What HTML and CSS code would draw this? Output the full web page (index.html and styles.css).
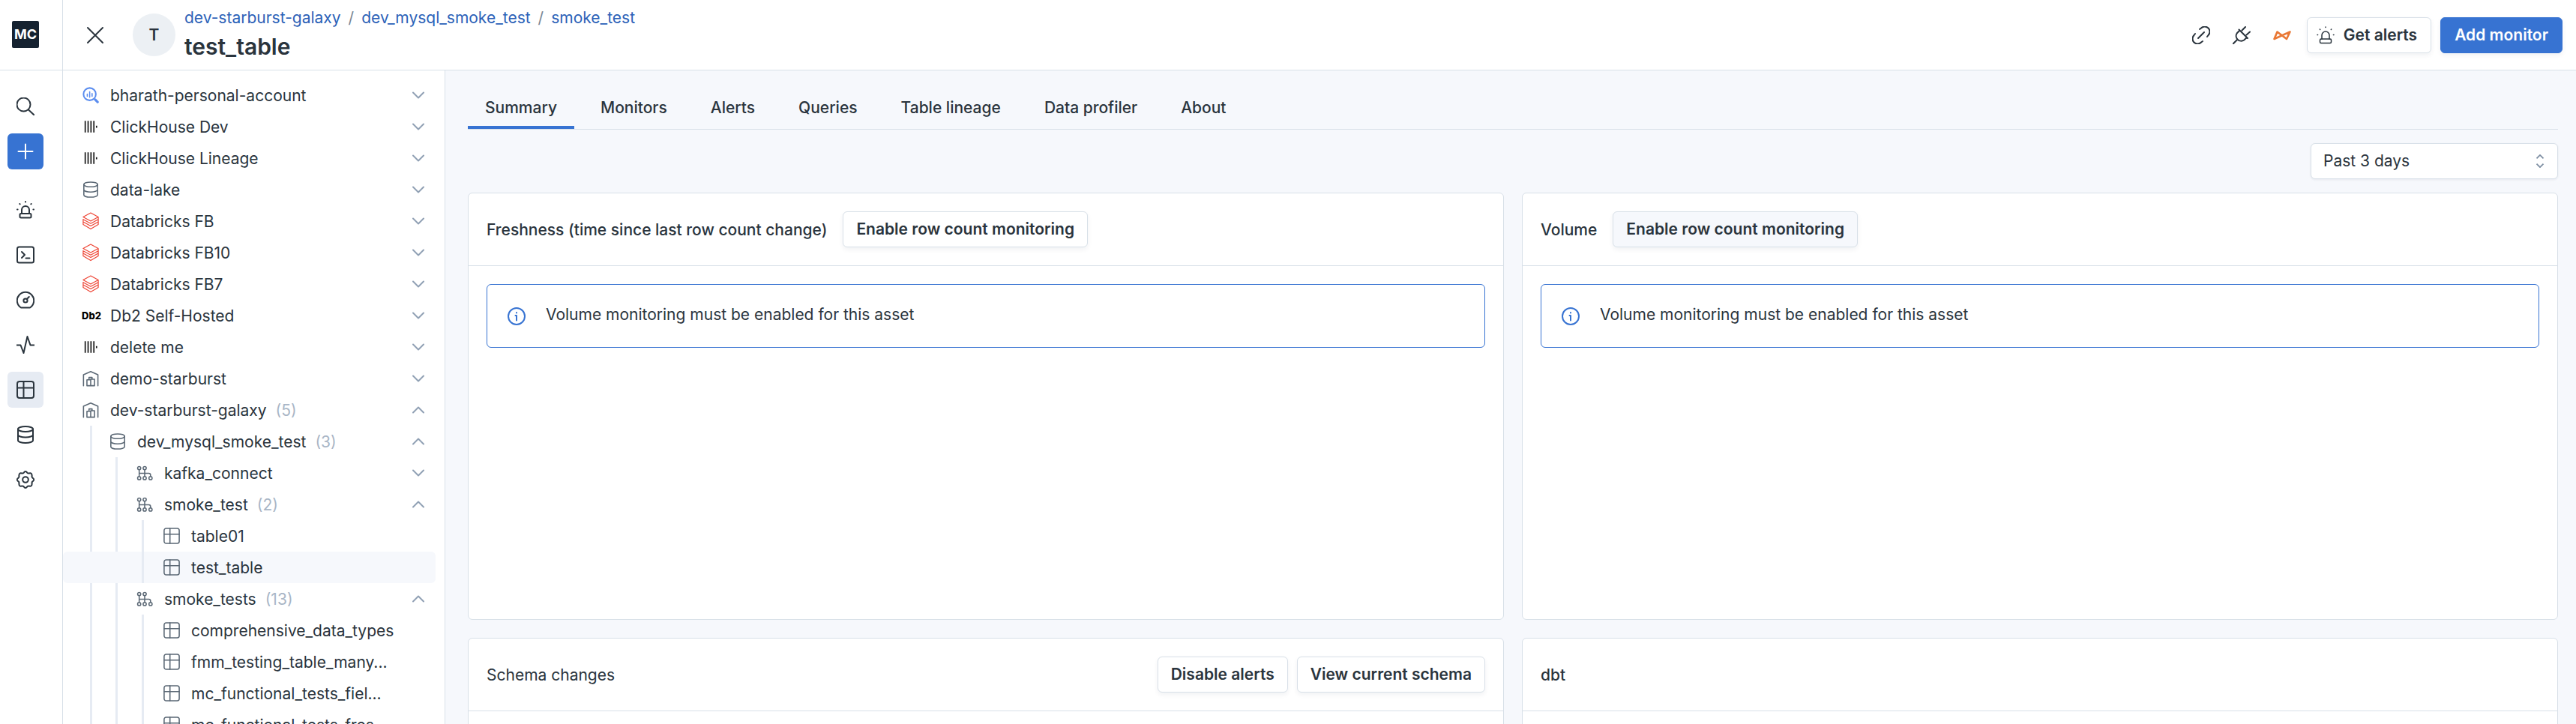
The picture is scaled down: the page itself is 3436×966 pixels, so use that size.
FILE: index.html
```html
<!DOCTYPE html>
<html lang="en">
<head>
  <meta charset="UTF-8">
  <meta name="viewport" content="width=device-width, initial-scale=1">
  <title>test_table</title>
  <link rel="stylesheet" href="styles.css">
</head>
<body>
  <!-- Icon sprite -->
  <svg class="sprite" aria-hidden="true">
    <symbol id="i-search" viewBox="0 0 24 24"><circle cx="9.5" cy="9.5" r="9"/><path d="M16 16.5l7.500 7"/></symbol>
    <symbol id="i-plus" viewBox="0 0 24 24"><path d="M12 2.500v19M2.500 12h19"/></symbol>
    <symbol id="i-siren" viewBox="0 0 24 24"><rect x="4.500" y="17" width="15" height="5.500" rx="1.500"/><path d="M7 17v-5a5 5 0 0 1 10 0v5M12 1v.4M4.300 4l.4.400M19.700 4l-.4.400M1 11.500h.6M22.400 11.500h.6"/></symbol>
    <symbol id="i-terminal" viewBox="0 0 24 24"><rect x="1" y="1.500" width="22" height="21" rx="2.500"/><path d="M7 8l4 4-4 4M12.500 16.500h5"/></symbol>
    <symbol id="i-gauge" viewBox="0 0 24 24"><path d="M6 22.500a11.200 11.200 0 1 1 12 0z"/><circle cx="12" cy="13" r="2.600"/><path d="M13.800 11l3-3"/></symbol>
    <symbol id="i-activity" viewBox="0 0 24 24"><path d="M.5 12.500h5l4 10.500 5-22 4 11.500h5"/></symbol>
    <symbol id="i-table" viewBox="0 0 24 24"><rect x="1" y="1" width="22" height="22" rx="3"/><path d="M1 9.500h22M9.500 1v22"/></symbol>
    <symbol id="i-db" viewBox="0 0 24 24"><ellipse cx="12" cy="4.500" rx="10" ry="3.500"/><path d="M2 4.500v15c0 2 4.500 3.500 10 3.500s10-1.500 10-3.500v-15M2 12c0 2 4.500 3.500 10 3.500s10-1.500 10-3.500"/></symbol>
    <symbol id="i-gear" viewBox="0 0 24 24"><circle cx="12" cy="12" r="3.800"/><path d="M9.800 2.600Q12-.6 14.200 2.600 15.400 4 17 3.400 20.800 2.600 20.600 7 20.200 8.800 21.700 9.800 24.800 12 21.700 14.200 20.200 15.200 20.600 17 20.800 21.400 17 20.600 15.400 20 14.200 21.400 12 24.600 9.800 21.400 8.600 20 7 20.600 3.200 21.400 3.400 17 3.800 15.200 2.300 14.200-.8 12 2.300 9.800 3.800 8.800 3.400 7 3.200 2.600 7 3.400 8.600 4 9.800 2.600z"/></symbol>
    <symbol id="i-close" viewBox="0 0 24 24"><path d="M2 2l20 20M22 2L2 22"/></symbol>
    <symbol id="i-down" viewBox="0 0 16 16"><path d="M1 4.500l7 7 7-7"/></symbol>
    <symbol id="i-up" viewBox="0 0 16 16"><path d="M1 11.500l7-7 7 7"/></symbol>
    <symbol id="i-link" viewBox="0 0 24 24"><path d="M8 16l8-8M10 4l2-1.500a6.500 6.500 0 0 1 9.500 9.500L20 14M4 10l-1.500 2a6.500 6.500 0 0 0 9.500 9.500l2-1.500"/></symbol>
    <symbol id="i-plug" viewBox="0 0 24 24"><path d="M.8 23.200l5-5M8.500 4.500l11.500 11.500M9.500 5.500L5.800 9.200a6.700 6.700 0 0 0 9.300 9.300L19 15M12.500 5.500l4.500-4.500M18.500 11.500l4.500-4"/></symbol>
    <symbol id="i-dbt" viewBox="0 0 24 24"><path d="M1.500 17L5.500 7.500 18 17 22.500 7.500z" stroke-width="2.600"/></symbol>
    <symbol id="i-bq" viewBox="0 0 24 24"><circle cx="10.500" cy="10.500" r="9" stroke-width="2.200"/><path d="M18.500 18.500l3.500 3.500" stroke-width="3.500"/><path d="M7 10.500v3M10.500 7v8M14 9.500v4"/></symbol>
    <symbol id="i-click" viewBox="0 0 24 24"><path d="M4 3.500v17M8.200 3.500v17M12.400 3.500v17M16.600 3.500v17M20.500 10.500v3" stroke-linecap="butt" stroke-width="1.800"/></symbol>
    <symbol id="i-bricks" viewBox="0 0 24 26"><path d="M1 7l11 6 11-6-11-6L1 7M1 10.500l11 6 11-6V14l-11 6-11-6v4l11 6.500 11-6.500V14M1 14v-3.500M23 10.500V7"/></symbol>
    <symbol id="i-house" viewBox="0 0 24 24"><path d="M1.500 22.500V6.500L12 2l10.500 4.500v16M6.500 22.500V14H12v8.500zM9.500 14v-3.500H14V13M12 13h5.500v9.500H12"/></symbol>
    <symbol id="i-schema" viewBox="0 0 24 24"><circle cx="4" cy="5" r="2.300"/><circle cx="12" cy="5" r="2.300"/><circle cx="4" cy="19.500" r="2.300"/><circle cx="12" cy="19.500" r="2.300"/><circle cx="20.500" cy="19.500" r="2.300"/><path d="M4 7.300v9.900M12 7.300v9.900M4 12.500h14q2.500 0 2.500 2.500v2.200"/></symbol>
    <symbol id="i-info" viewBox="0 0 24 24"><circle cx="12" cy="12" r="11"/><path d="M12 11v6.500M10.500 11H12M12 7v.5"/></symbol>
  </svg>

  <div class="app">
    <!-- Navigation rail -->
    <nav class="rail">
      <a class="logo" href="#">MC</a>
      <div class="rail-items">
        <button class="rail-btn" aria-label="Search"><svg class="icon"><use href="#i-search"/></svg></button>
        <button class="rail-btn rail-add" aria-label="Add"><svg class="icon"><use href="#i-plus"/></svg></button>
        <a class="rail-btn" href="#" aria-label="Alerts"><svg class="icon"><use href="#i-siren"/></svg></a>
        <a class="rail-btn" href="#" aria-label="Console"><svg class="icon"><use href="#i-terminal"/></svg></a>
        <a class="rail-btn" href="#" aria-label="Dashboard"><svg class="icon"><use href="#i-gauge"/></svg></a>
        <a class="rail-btn" href="#" aria-label="Performance"><svg class="icon"><use href="#i-activity"/></svg></a>
        <a class="rail-btn active" href="#" aria-label="Assets"><svg class="icon"><use href="#i-table"/></svg></a>
        <a class="rail-btn" href="#" aria-label="Data"><svg class="icon"><use href="#i-db"/></svg></a>
        <a class="rail-btn" href="#" aria-label="Settings"><svg class="icon"><use href="#i-gear"/></svg></a>
      </div>
    </nav>

    <div class="page">
      <header class="header">
        <button class="icon-btn" aria-label="Close"><svg class="icon"><use href="#i-close"/></svg></button>
        <div class="avatar">T</div>
        <div class="heading">
          <div class="crumbs">
            <a href="#">dev-starburst-galaxy</a><span>/</span><a href="#">dev_mysql_smoke_test</a><span>/</span><a href="#">smoke_test</a>
          </div>
          <h1>test_table</h1>
        </div>
        <div class="actions">
          <button class="icon-btn" aria-label="Copy link"><svg class="icon"><use href="#i-link"/></svg></button>
          <button class="icon-btn" aria-label="Connection"><svg class="icon"><use href="#i-plug"/></svg></button>
          <button class="icon-btn orange" aria-label="Integration"><svg class="icon"><use href="#i-dbt"/></svg></button>
          <button class="btn btn-alerts"><svg class="icon"><use href="#i-siren"/></svg>Get alerts</button>
          <button class="btn btn-primary">Add monitor</button>
        </div>
      </header>

      <div class="body">
        <!-- Asset tree -->
        <aside class="tree">
          <ul>
            <li><div class="row"><svg class="icon blue"><use href="#i-bq"/></svg><span class="name">bharath-personal-account</span><svg class="chev"><use href="#i-down"/></svg></div></li>
            <li><div class="row"><svg class="icon black"><use href="#i-click"/></svg><span class="name">ClickHouse Dev</span><svg class="chev"><use href="#i-down"/></svg></div></li>
            <li><div class="row"><svg class="icon black"><use href="#i-click"/></svg><span class="name">ClickHouse Lineage</span><svg class="chev"><use href="#i-down"/></svg></div></li>
            <li><div class="row"><svg class="icon"><use href="#i-db"/></svg><span class="name">data-lake</span><svg class="chev"><use href="#i-down"/></svg></div></li>
            <li><div class="row"><svg class="icon red"><use href="#i-bricks"/></svg><span class="name">Databricks FB</span><svg class="chev"><use href="#i-down"/></svg></div></li>
            <li><div class="row"><svg class="icon red"><use href="#i-bricks"/></svg><span class="name">Databricks FB10</span><svg class="chev"><use href="#i-down"/></svg></div></li>
            <li><div class="row"><svg class="icon red"><use href="#i-bricks"/></svg><span class="name">Databricks FB7</span><svg class="chev"><use href="#i-down"/></svg></div></li>
            <li><div class="row"><span class="db2">Db2</span><span class="name">Db2 Self-Hosted</span><svg class="chev"><use href="#i-down"/></svg></div></li>
            <li><div class="row"><svg class="icon black"><use href="#i-click"/></svg><span class="name">delete me</span><svg class="chev"><use href="#i-down"/></svg></div></li>
            <li><div class="row"><svg class="icon"><use href="#i-house"/></svg><span class="name">demo-starburst</span><svg class="chev"><use href="#i-down"/></svg></div></li>
            <li>
              <div class="row"><svg class="icon"><use href="#i-house"/></svg><span class="name">dev-starburst-galaxy</span><span class="count">(5)</span><svg class="chev"><use href="#i-up"/></svg></div>
              <ul class="level-1">
                <li>
                  <div class="row"><svg class="icon"><use href="#i-db"/></svg><span class="name">dev_mysql_smoke_test</span><span class="count">(3)</span><svg class="chev"><use href="#i-up"/></svg></div>
                  <ul class="level-2">
                    <li><div class="row"><svg class="icon"><use href="#i-schema"/></svg><span class="name">kafka_connect</span><svg class="chev"><use href="#i-down"/></svg></div></li>
                    <li>
                      <div class="row"><svg class="icon"><use href="#i-schema"/></svg><span class="name">smoke_test</span><span class="count">(2)</span><svg class="chev"><use href="#i-up"/></svg></div>
                      <ul class="level-3">
                        <li><div class="row"><svg class="icon"><use href="#i-table"/></svg><span class="name">table01</span></div></li>
                        <li><div class="row selected"><svg class="icon"><use href="#i-table"/></svg><span class="name">test_table</span></div></li>
                      </ul>
                    </li>
                    <li>
                      <div class="row"><svg class="icon"><use href="#i-schema"/></svg><span class="name">smoke_tests</span><span class="count">(13)</span><svg class="chev"><use href="#i-up"/></svg></div>
                      <ul class="level-3">
                        <li><div class="row"><svg class="icon"><use href="#i-table"/></svg><span class="name">comprehensive_data_types</span></div></li>
                        <li><div class="row"><svg class="icon"><use href="#i-table"/></svg><span class="name">fmm_testing_table_many...</span></div></li>
                        <li><div class="row"><svg class="icon"><use href="#i-table"/></svg><span class="name">mc_functional_tests_fiel...</span></div></li>
                        <li><div class="row"><svg class="icon"><use href="#i-table"/></svg><span class="name">mc_functional_tests_fres...</span></div></li>
                      </ul>
                    </li>
                  </ul>
                </li>
              </ul>
            </li>
          </ul>
        </aside>

        <main class="main">
          <nav class="tabs">
            <a class="tab active" href="#">Summary</a>
            <a class="tab" href="#">Monitors</a>
            <a class="tab" href="#">Alerts</a>
            <a class="tab" href="#">Queries</a>
            <a class="tab" href="#">Table lineage</a>
            <a class="tab" href="#">Data profiler</a>
            <a class="tab" href="#">About</a>
          </nav>

          <div class="filter">
            <div class="select-wrap">
              <select class="select" aria-label="Time range">
                <option>Past 3 days</option>
              </select>
              <svg class="select-icon" viewBox="0 0 12 20"><path d="M1 6l5-5 5 5M1 14l5 5 5-5"/></svg>
            </div>
          </div>

          <div class="cards">
            <section class="card">
              <div class="card-head">
                <h2>Freshness (time since last row count change)</h2>
                <button class="btn">Enable row count monitoring</button>
              </div>
              <div class="card-body">
                <div class="notice"><svg class="icon"><use href="#i-info"/></svg><span>Volume monitoring must be enabled for this asset</span></div>
              </div>
            </section>
            <section class="card">
              <div class="card-head">
                <h2>Volume</h2>
                <button class="btn btn-hover">Enable row count monitoring</button>
              </div>
              <div class="card-body">
                <div class="notice"><svg class="icon"><use href="#i-info"/></svg><span>Volume monitoring must be enabled for this asset</span></div>
              </div>
            </section>
            <section class="card">
              <div class="card-head">
                <h2 class="regular">Schema changes</h2>
                <div class="card-actions">
                  <button class="btn">Disable alerts</button>
                  <button class="btn">View current schema</button>
                </div>
              </div>
            </section>
            <section class="card">
              <div class="card-head">
                <h2>dbt</h2>
              </div>
            </section>
          </div>
        </main>
      </div>
    </div>
  </div>
</body>
</html>
```

FILE: styles.css
```css
* {
  margin: 0;
  padding: 0;
  box-sizing: border-box;
}
body {
  font-family: Inter, sans-serif;
  font-size: 21px;
  line-height: 30px;
  color: #2a343d;
  background: #fff;
}
a {
  color: inherit;
  text-decoration: none;
}
button {
  font: inherit;
  color: inherit;
  background: none;
  border: none;
  cursor: pointer;
}
ul {
  list-style: none;
}
.sprite {
  display: none;
}
.icon {
  width: 24px;
  height: 24px;
  flex: none;
  fill: none;
  stroke: currentColor;
  stroke-width: 2;
  stroke-linecap: round;
  stroke-linejoin: round;
}
.app {
  display: flex;
  height: 100vh;
  overflow: hidden;
}

/* Rail */
.rail {
  width: 84px;
  flex: none;
  border-right: 1px solid #d8e0e8;
}
.logo {
  display: flex;
  align-items: center;
  justify-content: center;
  width: 36px;
  height: 36px;
  margin: 28px 0 0 16px;
  border-radius: 2px;
  background: #152230;
  color: #fff;
  font-size: 18px;
  font-weight: 700;
}
.rail-items {
  display: flex;
  flex-direction: column;
  gap: 12px;
  margin-top: 29px;
  padding: 24px 0 0 10px;
  border-top: 1px solid #d8e0e8;
}
.rail-btn {
  display: flex;
  align-items: center;
  justify-content: center;
  width: 48px;
  height: 48px;
  border-radius: 6px;
}
.rail-btn.active {
  background: #e6ebf3;
}
.rail-add {
  margin-bottom: 18px;
  background: #3773d2;
  color: #fff;
}

/* Header */
.page {
  flex: 1;
  min-width: 0;
  display: flex;
  flex-direction: column;
}
.header {
  display: flex;
  align-items: center;
  height: 94px;
  flex: none;
  padding: 0 18px 0 31px;
  border-bottom: 1px solid #d8e0e8;
}
.icon-btn {
  display: flex;
  width: 24px;
  height: 24px;
}
.avatar {
  display: flex;
  align-items: center;
  justify-content: center;
  width: 57px;
  height: 57px;
  margin: 0 12px 0 38px;
  border-radius: 50%;
  background: #ecf0f4;
  font-weight: 600;
}
.crumbs {
  display: flex;
  gap: 10px;
  color: #7b8794;
}
.crumbs a {
  color: #2c62b8;
}
.heading h1 {
  font-size: 30px;
  line-height: 46px;
  font-weight: 600;
}
.actions {
  display: flex;
  align-items: center;
  gap: 30px;
  margin-left: auto;
}
.orange {
  color: #e97835;
}
.btn {
  display: flex;
  align-items: center;
  height: 48px;
  padding: 0 17px;
  border: 1px solid #d8e0e8;
  border-radius: 6px;
  background: #fff;
  box-shadow: 0 3px 6px rgba(20, 40, 60, 0.06);
  font-weight: 600;
  white-space: nowrap;
}
.btn-hover {
  background: #f6f8fc;
}
.btn-alerts {
  gap: 12px;
  margin-left: -9px;
  padding: 0 18px 0 12px;
}
.btn-alerts .icon {
  stroke-width: 1.5;
}
.btn-primary {
  margin-left: -18px;
  padding: 0 18px;
  background: #3773d2;
  border-color: #3773d2;
  color: #fff;
}

/* Tree */
.body {
  flex: 1;
  min-height: 0;
  display: flex;
}
.tree {
  width: 510px;
  flex: none;
  padding: 12px 12px 0 0;
  overflow: hidden;
  border-right: 1px solid #d8e0e8;
}
.row {
  display: flex;
  align-items: center;
  height: 42px;
  padding: 0 15px 0 26px;
  border-radius: 6px;
}
.row.selected {
  background: #f6f8fc;
}
.row .icon {
  width: 22px;
  margin-right: 15px;
  color: #5b6875;
  stroke-width: 1.7;
}
.row .blue { color: #5b8def; }
.row .black { color: #111; }
.row .red { color: #ee4434; stroke-width: 1.3; }
.db2 {
  width: 24px;
  margin: 0 14px 0 -1px;
  color: #000;
  font-size: 13px;
  font-weight: 800;
}
.name,
.count {
  padding-top: 2px;
}
.count {
  margin-left: 12px;
  color: #a9b6c6;
}
.chev {
  width: 16px;
  height: 16px;
  margin-left: auto;
  fill: none;
  stroke: #90a0b4;
  stroke-width: 2;
  stroke-linecap: round;
  stroke-linejoin: round;
}
.level-1 .row { padding-left: 62px; }
.level-2 .row { padding-left: 98px; }
.level-3 .row { padding-left: 134px; }

/* Guide lines run over the selected row */
.level-1, .level-2, .level-3 {
  position: relative;
}
.level-1::before, .level-2::before, .level-3::before {
  content: "";
  position: absolute;
  top: 0;
  bottom: 0;
  left: 36px;
  width: 3px;
  background: #e6ebf3;
}
.level-2::before { left: 70px; }
.level-3::before { left: 105px; }

/* Main */
.main {
  flex: 1;
  min-width: 0;
  padding: 18px 24px 24px 30px;
  overflow: hidden;
  background: #f6f8fc;
}
.tabs {
  display: flex;
  gap: 12px;
  border-bottom: 1px solid #d8e0e8;
}
.tab {
  height: 60px;
  padding: 0 23px;
  border-bottom: 4px solid transparent;
  font-weight: 500;
  line-height: 64px;
}
.tab.active {
  border-color: #3773d2;
}
.filter {
  display: flex;
  justify-content: flex-end;
  margin: 18px 0;
}
.select-wrap {
  position: relative;
  width: 330px;
}
.select {
  width: 100%;
  height: 48px;
  padding: 0 16px;
  appearance: none;
  border: 1px solid #d8e0e8;
  border-radius: 6px;
  background: #fff;
  box-shadow: 0 1px 3px rgba(20, 40, 60, 0.08);
  color: inherit;
  font: inherit;
}
.select-icon {
  position: absolute;
  top: 15px;
  right: 18px;
  width: 12px;
  height: 18px;
  fill: none;
  stroke: #7f8fa3;
  stroke-width: 2;
  pointer-events: none;
}
.cards {
  display: grid;
  grid-template-columns: 1fr 1fr;
  grid-auto-rows: 570px;
  gap: 24px;
}
.card {
  border: 1px solid #d8e0e8;
  border-radius: 6px;
  background: #fff;
}
.card-head {
  display: flex;
  align-items: center;
  gap: 21px;
  height: 97px;
  padding: 0 24px;
  border-bottom: 1px solid #d8e0e8;
}
.card-head h2 {
  padding-top: 2px;
  font-size: 21px;
  font-weight: 500;
}
.card-head .regular {
  font-weight: 400;
}
.card-actions {
  display: flex;
  gap: 12px;
  margin-left: auto;
}
.card-body {
  padding: 24px;
}
.notice {
  display: flex;
  align-items: center;
  gap: 27px;
  height: 85px;
  padding: 0 27px;
  border: 1px solid #3773d2;
  border-radius: 6px;
}
.notice span {
  padding-bottom: 3px;
}
.notice .icon {
  color: #3773d2;
}
```
